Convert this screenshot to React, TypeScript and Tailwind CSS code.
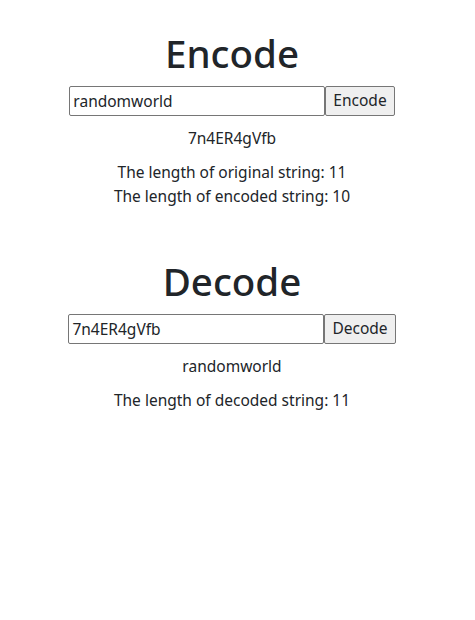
import React, { useState } from "react";

const Section: React.FC<{
  title: string;
  value: string;
  button: string;
  result: string;
  lines: string[];
}> = ({ title, value, button, result, lines }) => {
  const [text, setText] = useState(value);
  return (
    <section className="flex flex-col items-center">
      <h1 className="text-[38.5px] leading-[48px] font-medium mb-[9px]">{title}</h1>
      <div className="flex">
        <input
          className="w-[256px] h-[30px] border border-[#767676] rounded-[2px] px-[3px] text-[15.5px] bg-white outline-none"
          value={text}
          onChange={(e) => setText(e.target.value)}
        />
        <button className="h-[30px] px-[7px] border border-[#767676] rounded-[2px] bg-[#efefef] text-[15.5px]">
          {button}
        </button>
      </div>
      <p className="mt-[10px] leading-6">{result}</p>
      <div className="mt-[10px] flex flex-col items-center">
        {lines.map((l) => (
          <p key={l} className="leading-6">
            {l}
          </p>
        ))}
      </div>
    </section>
  );
};

export default function App() {
  return (
    <main className="min-h-screen bg-white text-[#212529] text-[15.5px] font-['Noto_Sans',sans-serif] pt-[29px] pr-[11px] flex flex-col gap-[49px]">
      <Section
        title="Encode"
        value="randomworld"
        button="Encode"
        result="7n4ER4gVfb"
        lines={["The length of original string: 11", "The length of encoded string: 10"]}
      />
      <Section
        title="Decode"
        value="7n4ER4gVfb"
        button="Decode"
        result="randomworld"
        lines={["The length of decoded string: 11"]}
      />
    </main>
  );
}
